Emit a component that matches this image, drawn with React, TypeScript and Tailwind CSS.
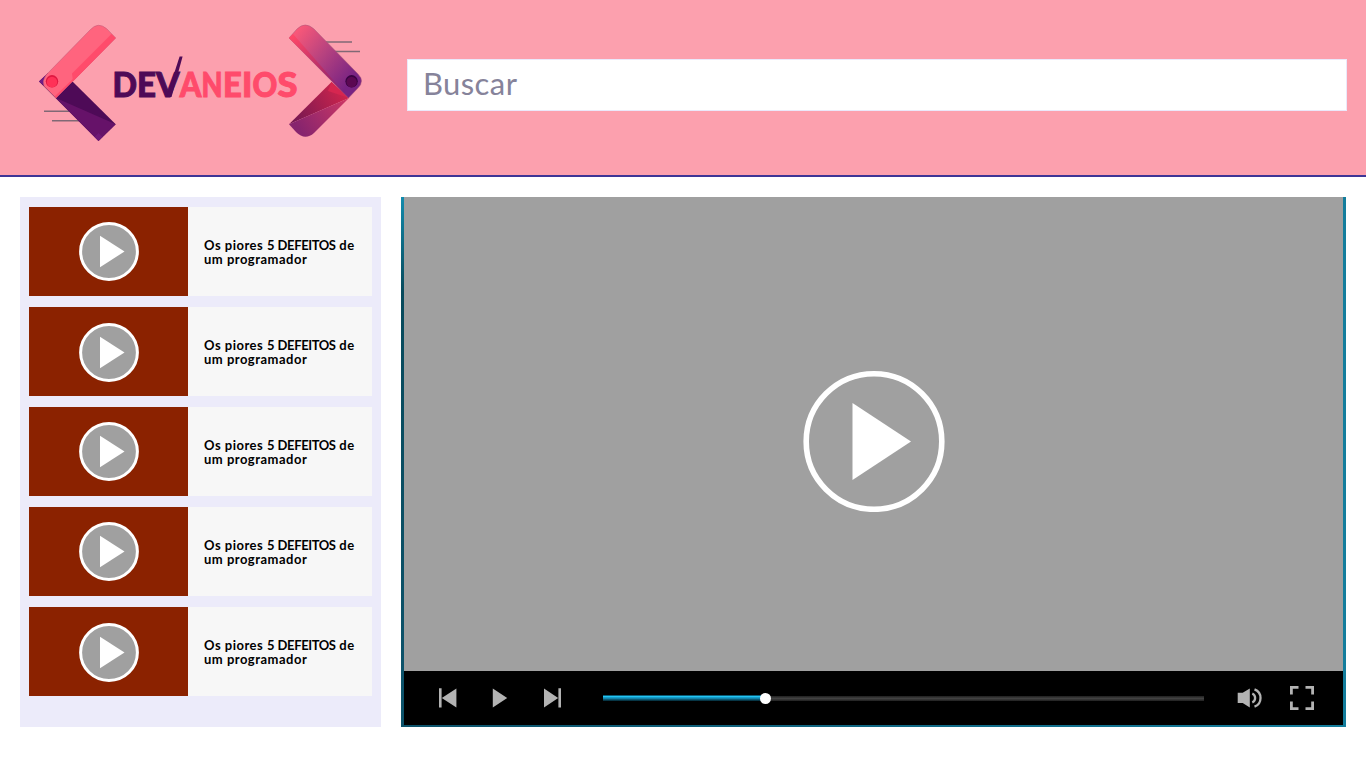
import React from "react";

const videos = [
  { offset: "pt-0" },
  { offset: "pt-0.5" },
  { offset: "pt-0" },
  { offset: "pt-0" },
  { offset: "pt-0.5" },
];

const letters = [
  { char: "D", x: 112.5, width: 24.5, color: "#4e0a57" },
  { char: "E", x: 137, width: 19, color: "#4e0a57" },
  { char: "V", x: 156, width: 23.5, color: "#4e0a57" },
  { char: "A", x: 179.7, width: 21.6, color: "#ff4b6b" },
  { char: "N", x: 201.5, width: 21, color: "#ff4b6b" },
  { char: "E", x: 223, width: 18.8, color: "#ff4b6b" },
  { char: "I", x: 242, width: 10.3, color: "#ff4b6b" },
  { char: "O", x: 252.5, width: 24.8, color: "#ff4b6b" },
  { char: "S", x: 277.5, width: 20, color: "#ff4b6b" },
];

function Logo() {
  return (
    <svg viewBox="36 20 330 125" className="h-[125px] w-[330px] shrink-0" aria-label="Devaneios">
      <defs>
        <linearGradient id="top" gradientUnits="userSpaceOnUse" x1="290" y1="34" x2="350" y2="82">
          <stop offset="0" stopColor="#ff5a78" />
          <stop offset="0.5" stopColor="#b7427f" />
          <stop offset="1" stopColor="#782383" />
        </linearGradient>
        <linearGradient id="edge" gradientUnits="userSpaceOnUse" x1="290" y1="38" x2="347" y2="97">
          <stop offset="0" stopColor="#ff4868" />
          <stop offset="0.55" stopColor="#b52d68" />
          <stop offset="1" stopColor="#71207b" />
        </linearGradient>
        <linearGradient id="low" gradientUnits="userSpaceOnUse" x1="343" y1="91" x2="294" y2="122">
          <stop offset="0" stopColor="#ce244c" />
          <stop offset="1" stopColor="#751852" />
        </linearGradient>
        <linearGradient id="low2" gradientUnits="userSpaceOnUse" x1="346" y1="98" x2="300" y2="130">
          <stop offset="0" stopColor="#cc3764" />
          <stop offset="1" stopColor="#87246e" />
        </linearGradient>
      </defs>
      <path d="M44 111.3h28M52 120.7h28M326 42h26M334 51.5h26" stroke="#806875" strokeWidth="1.4" />
      <path d="M39 81.5 48 73 73 82 115.7 124.3 98.5 141Z" fill="#4e0a57" />
      <path d="M39 81.5 48 73 51 91Z" fill="#711c85" />
      <path d="M56 98 115.7 124.3 98.5 141Z" fill="#661269" />
      <path d="M94.5 137 98.5 141 102.5 137 98.5 133Z" fill="#781b86" opacity=".5" />
      <path d="M56 98 44 86Q42 81 46 75L90 30Q98 21 107 29L115.7 38Z" fill="#ff647e" stroke="#bd5877" strokeWidth=".5" />
      <path d="m111 42.5 4.7-4.5L56 98 54.5 96.5Z" fill="#ff4b6b" />
      <path d="m111.5 34 4.2 4L73 81.5 72 73.5Z" fill="#ff4b6b" />
      <circle cx="52" cy="81.3" r="6.2" fill="#df1841" />
      <circle cx="52" cy="82" r="5.2" fill="#ff3157" />

      <path d="M331.5 82 289 124.3 349 98Z" fill="url(#low)" />
      <path d="M331.5 82 349 98 328 91Z" fill="#d62650" />
      <path d="M289 124.3 349 98 314 133Q305 141 296 132Z" fill="url(#low2)" />
      <path d="M289 38 297 29Q305 21 314 29L358 74Q365 81 358 88L348.5 98Z" fill="url(#top)" stroke="#a75376" strokeWidth=".5" />
      <path d="m289 38 4-4 56 64Z" fill="url(#edge)" />
      <circle cx="351.6" cy="81.3" r="6.2" fill="#390342" />
      <circle cx="351.6" cy="82" r="5.2" fill="#5b0852" />
      <g fontFamily="Lato, sans-serif" fontWeight="900" fontSize="35" strokeWidth="1">
        {letters.map(({ char, x, width, color }, i) => (
          <text key={i} x={x} y="96.5" fill={color} stroke={color} textLength={width} lengthAdjust="spacingAndGlyphs">
            {char}
          </text>
        ))}
      </g>
      <path d="M166.5 97 179.6 56.5h3L171.5 97Z" fill="#4e0a57" />
    </svg>
  );
}

function Thumb() {
  return (
    <svg viewBox="0 0 60 59" className="h-[59px] w-[60px]">
      <ellipse cx="30" cy="29.5" rx="28.4" ry="27.9" fill="#a0a0a0" stroke="#fff" strokeWidth="3" />
      <path d="M21 13.7 45.5 29.5 21 45.3Z" fill="#fff" />
    </svg>
  );
}

function Controls() {
  return (
    <div className="flex h-[54px] items-center bg-black text-[#b3b3b3]">
      <svg viewBox="0 0 126 24" className="ml-[34px] h-6 w-[126px]" fill="currentColor">
        <path d="M1 2.3h2.6v19.2H1zM3.8 12 18.4 2.5v19zM54.8 2.5 69.2 12 54.8 21.5zM106 2.5 120.2 12 106 21.5zM120.4 2.3h2.6v19.2h-2.6z" />
      </svg>
      <div className="relative ml-[39px] flex h-[11px] w-[601px] items-center">
        <div className="h-[6px] w-[162px] bg-linear-to-b from-[#084b61] via-[#16a5d4] via-45% to-[#04242f]">
          <div className="mt-px h-px bg-[#22c5f4]" />
        </div>
        <div className="h-[5px] flex-1 bg-linear-to-b from-[#202020] via-[#424242] to-[#202020]" />
        <span className="absolute left-[157px] top-0 size-[11px] rounded-full bg-white" />
      </div>
      <svg viewBox="0 0 28 24" className="ml-[32px] h-6 w-7">
        <path d="M1.7 6.8h5L13.8 2.4v19.2L6.7 17h-5Z" fill="#b3b3b3" />
        <path d="M16.3 7.5a5 5 0 0 1 0 9M18.5 3.3a9.3 9.3 0 0 1 0 17.4" fill="none" stroke="#b3b3b3" strokeWidth="2.3" />
      </svg>
      <svg viewBox="0 0 24 24" className="ml-[26px] size-6" fill="none" stroke="#b3b3b3" strokeWidth="2.8">
        <path d="M1.4 8.5V1.4h7.1M15.5 1.4h7.1v7.1M22.6 15.5v7.1h-7.1M8.5 22.6H1.4v-7.1" />
      </svg>
    </div>
  );
}

export default function App() {
  return (
    <div className="h-[768px] w-[1366px] overflow-hidden bg-white font-['Lato',sans-serif]">
      <header className="flex h-[177px] items-start border-b-2 border-[#3e3596] bg-[#fca0ae] pl-[36px] pr-[19px]">
        <div className="mt-5"><Logo /></div>
        <input
          aria-label="Buscar"
          placeholder="Buscar"
          className="ml-[41px] mt-[59px] h-[52px] min-w-0 flex-1 border border-[#ebe8fa] bg-white pb-[5px] pl-[15px] pr-4 text-[31px] tracking-[0.4px] outline-none placeholder:text-[#86839a]"
        />
      </header>
      <main className="flex gap-5 pl-5 pr-5 pt-5">
        <aside className="flex h-[530px] w-[361px] flex-col gap-[11px] bg-[#ecebfa] px-[9px] pt-[10px]">
          {videos.map((video, i) => (
            <article key={i} className="flex h-[89px] w-[343px] bg-[#f7f7f7]">
              <div className={`flex w-[159px] items-center justify-center bg-[#8b2200] pl-px ${video.offset}`}>
                <Thumb />
              </div>
              <p className="pl-4 pt-[31px] text-[13px] font-bold leading-[14px] tracking-[0.5px] text-black">
                Os piores 5 <span className="-ml-px tracking-[-0.4px]">DEFEITOS</span> de
                <br />
                um programador
              </p>
            </article>
          ))}
        </aside>
        <section className="flex h-[530px] w-[945px] flex-col bg-linear-to-r from-[#0c526a] to-[#137d9c] pb-[2px]">
          <div className="flex h-[474px] items-stretch justify-between bg-[#a0a0a0]">
            <div className="w-[3px] bg-linear-to-b from-[#128bad] via-[#074a5c] via-20% to-[#0c526a]" />
            <svg viewBox="0 0 142 142" className="mt-[173px] h-[142px] w-[142px]">
              <circle cx="71" cy="71.5" r="67.8" fill="none" stroke="#fff" strokeWidth="5.6" />
              <path d="M49.5 33 108 71.5 49.5 110Z" fill="#fff" />
            </svg>
            <div className="w-[3px] bg-[#137d9c]" />
          </div>
          <div className="px-[3px]"><Controls /></div>
        </section>
      </main>
    </div>
  );
}
